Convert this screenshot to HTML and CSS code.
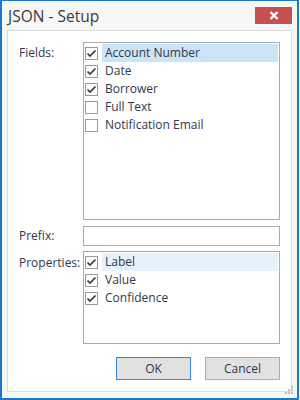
FILE: index.html
```html
<!DOCTYPE html>
<html lang="en">
<head>
  <meta charset="UTF-8">
  <title>JSON - Setup</title>
  <link rel="stylesheet" href="styles.css">
</head>
<body>
  <div class="window">
    <div class="titlebar">
      <span class="title">JSON - Setup</span>
      <button class="close">
        <svg width="10" height="9" viewBox="0 0 10 9"><path d="M1.5 1 L8.5 8 M8.5 1 L1.5 8" stroke="#fff" stroke-width="2.4"/></svg>
      </button>
    </div>

    <div class="panel">
      <div class="form">
        <label class="label">Fields:</label>
        <div class="list fields">
          <div class="item selected"><span class="check"><svg viewBox="0 0 11 11"><path d="M1.5 5.5 L4 8 L9.5 2.5" /></svg></span><span class="text">Account Number</span></div>
          <div class="item"><span class="check"><svg viewBox="0 0 11 11"><path d="M1.5 5.5 L4 8 L9.5 2.5" /></svg></span><span class="text">Date</span></div>
          <div class="item"><span class="check"><svg viewBox="0 0 11 11"><path d="M1.5 5.5 L4 8 L9.5 2.5" /></svg></span><span class="text">Borrower</span></div>
          <div class="item"><span class="check"></span><span class="text">Full Text</span></div>
          <div class="item"><span class="check"></span><span class="text">Notification Email</span></div>
        </div>

        <label class="label mid">Prefix:</label>
        <input type="text" class="input">

        <label class="label">Properties:</label>
        <div class="list props">
          <div class="item hover"><span class="check"><svg viewBox="0 0 11 11"><path d="M1.5 5.5 L4 8 L9.5 2.5" /></svg></span><span class="text">Label</span></div>
          <div class="item"><span class="check"><svg viewBox="0 0 11 11"><path d="M1.5 5.5 L4 8 L9.5 2.5" /></svg></span><span class="text">Value</span></div>
          <div class="item"><span class="check"><svg viewBox="0 0 11 11"><path d="M1.5 5.5 L4 8 L9.5 2.5" /></svg></span><span class="text">Confidence</span></div>
        </div>
      </div>

      <div class="buttons">
        <button class="button default">OK</button>
        <button class="button">Cancel</button>
      </div>
    </div>

    <svg class="grip" width="10" height="10" viewBox="0 0 10 10">
      <rect x="7" y="1" width="2" height="2" fill="#bdbdbd"/>
      <rect x="4" y="4" width="2" height="2" fill="#bdbdbd"/>
      <rect x="7" y="4" width="2" height="2" fill="#bdbdbd"/>
      <rect x="1" y="7" width="2" height="2" fill="#bdbdbd"/>
      <rect x="4" y="7" width="2" height="2" fill="#bdbdbd"/>
      <rect x="7" y="7" width="2" height="2" fill="#bdbdbd"/>
    </svg>
  </div>
</body>
</html>
```

FILE: styles.css
```css
body {
  margin: 0;
  font-family: "Open Sans", "Noto Sans", sans-serif;
  font-size: 12px;
  color: #2e3850;
  background-color: #fff;
}

.window {
  position: relative;
  width: 299px;
  height: 400px;
  box-sizing: border-box;
  border: 2px solid #1b78d0;
  border-top-width: 1px;
  background-color: #f7f7f7;
  display: flex;
  flex-direction: column;
}

.titlebar {
  height: 29px;
  display: flex;
  align-items: flex-start;
  justify-content: space-between;
  padding: 0 5px 0 5px;
}

.title {
  font-size: 15.5px;
  color: #3a3a3a;
  padding-top: 4px;
  padding-left: 1px;
}

.close {
  width: 37px;
  height: 17px;
  margin-top: 6px;
  border: none;
  padding: 0;
  background-color: #c75050;
  display: flex;
  align-items: center;
  justify-content: center;
}

.panel {
  margin: 0 5px 6px 5px;
  flex: 1;
  border: 1px solid #dadada;
  background-color: #fff;
  padding: 11px 11px 0 11px;
  display: flex;
  flex-direction: column;
}

.form {
  display: grid;
  grid-template-columns: 64px 197px;
  grid-template-rows: 178px 20px 92px;
  row-gap: 6px;
}

.label {
  padding-top: 4px;
  line-height: 14px;
}

.label.mid {
  padding-top: 3px;
}

.list {
  border: 1px solid #ababab;
  padding: 1px 0;
  box-sizing: border-box;
}

.props {
  margin-top: -1px;
}

.item {
  height: 18px;
  display: flex;
  align-items: center;
}

.check {
  width: 13px;
  height: 13px;
  box-sizing: border-box;
  border: 1px solid #9a9a9a;
  margin: 0 4px 0 1px;
  background-color: #fff;
  display: flex;
}

.check svg {
  width: 11px;
  height: 11px;
  fill: none;
  stroke: #3a3a3a;
  stroke-width: 1.7;
}

.text {
  flex: 1;
  height: 18px;
  line-height: 18px;
  padding-left: 3px;
  margin-right: 1px;
}

.selected .text {
  background-color: #cce4f7;
}

.hover .text {
  background-color: #e5f1fb;
}

.input {
  border: 1px solid #ababab;
  margin: 0;
  padding: 0;
  height: 20px;
  box-sizing: border-box;
  outline: none;
}

.buttons {
  display: flex;
  justify-content: flex-end;
  gap: 14px;
  margin-top: 13px;
}

.button {
  width: 75px;
  height: 23px;
  box-sizing: border-box;
  border: 1px solid #adadad;
  background-color: #e1e1e1;
  font-family: "Open Sans", "Noto Sans", sans-serif;
  font-size: 12px;
  color: #2e3850;
  padding: 0;
}

.button.default {
  border-color: #2f8ae0;
}

.grip {
  position: absolute;
  right: 3px;
  bottom: 3px;
}
```
